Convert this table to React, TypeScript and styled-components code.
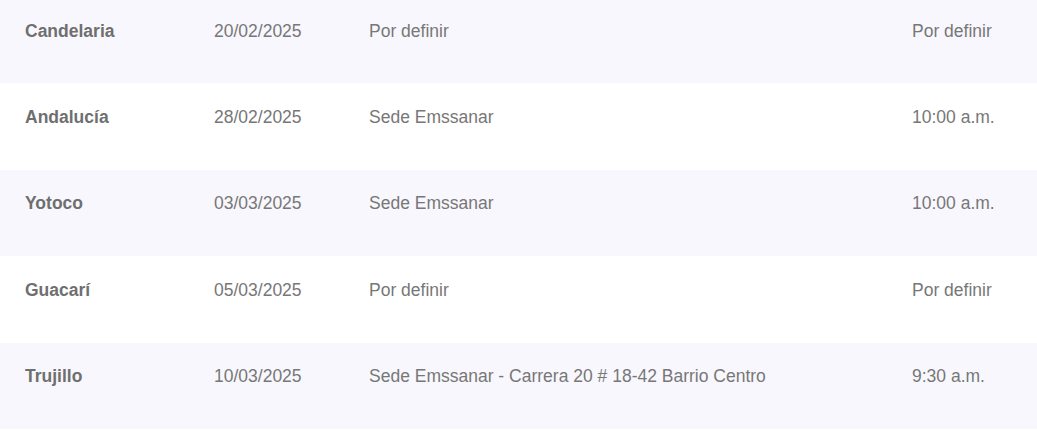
import { FC } from "react";
import styled, { createGlobalStyle } from "styled-components";

const GlobalStyle = createGlobalStyle`
  body {
    margin: 0;
    background: #ffffff;
    font-family: "Liberation Sans", Arial, sans-serif;
  }
`;

const palette = {
  stripe: "#f8f7fd",
  text: "#777777",
  strong: "#6f6f6f",
};

const Table = styled.div`
  width: 100%;
  margin-top: -3px;
`;

const Row = styled.div<{ $striped: boolean }>`
  display: grid;
  grid-template-columns: 189px 155px 543px 1fr;
  height: 86.4px;
  padding: 20.5px 0 0 25px;
  box-sizing: border-box;
  background: ${({ $striped }) => ($striped ? palette.stripe : "#ffffff")};
`;

const Cell = styled.div<{ $strong?: boolean }>`
  font-size: 17.5px;
  line-height: 26px;
  color: ${({ $strong }) => ($strong ? palette.strong : palette.text)};
  font-weight: ${({ $strong }) => ($strong ? 700 : 400)};
  white-space: nowrap;
`;

interface IMeeting {
  town: string;
  date: string;
  place: string;
  time: string;
}

const meetings: IMeeting[] = [
  { town: "Candelaria", date: "20/02/2025", place: "Por definir", time: "Por definir" },
  { town: "Andalucía", date: "28/02/2025", place: "Sede Emssanar", time: "10:00 a.m." },
  { town: "Yotoco", date: "03/03/2025", place: "Sede Emssanar", time: "10:00 a.m." },
  { town: "Guacarí", date: "05/03/2025", place: "Por definir", time: "Por definir" },
  {
    town: "Trujillo",
    date: "10/03/2025",
    place: "Sede Emssanar - Carrera 20 # 18-42 Barrio Centro",
    time: "9:30 a.m.",
  },
];

const App: FC = () => {
  return (
    <>
      <GlobalStyle />
      <Table>
        {meetings.map((meeting, index) => (
          <Row key={meeting.town} $striped={index % 2 === 0}>
            <Cell $strong>{meeting.town}</Cell>
            <Cell>{meeting.date}</Cell>
            <Cell>{meeting.place}</Cell>
            <Cell>{meeting.time}</Cell>
          </Row>
        ))}
      </Table>
    </>
  );
};

export default App;
